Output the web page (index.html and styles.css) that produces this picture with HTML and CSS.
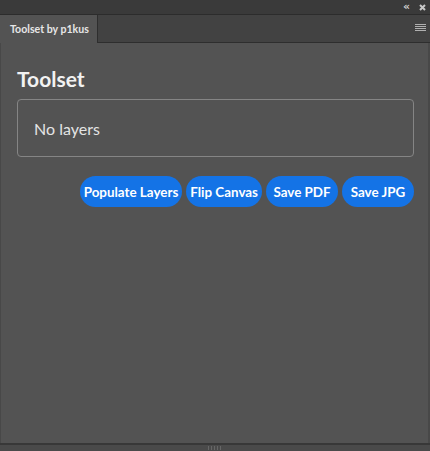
FILE: index.html
```html
<!DOCTYPE html>
<html>
<head>
<meta charset="utf-8">
<link rel="stylesheet" href="styles.css">
</head>
<body>
<div class="window">
  <div class="topbar">
    <span class="collapse">&lsaquo;&lsaquo;</span>
    <svg class="close" width="7" height="7" viewBox="0 0 7 7"><path d="M1 1L6 6M6 1L1 6" stroke="#c8c8c8" stroke-width="2"/></svg>
  </div>
  <div class="tabbar">
    <div class="tab">Toolset by p1kus</div>
    <div class="tabrest">
      <svg class="menu" width="11" height="9" viewBox="0 0 11 9"><path d="M0 0.5H11M0 2.5H11M0 4.5H11M0 6.5H11" stroke="#b0b0b0" stroke-width="1"/></svg>
    </div>
  </div>
  <div class="panel">
    <h1 class="title">Toolset</h1>
    <div class="layers">No layers</div>
    <div class="actions">
      <button class="btn">Populate Layers</button>
      <button class="btn">Flip Canvas</button>
      <button class="btn">Save PDF</button>
      <button class="btn">Save JPG</button>
    </div>
  </div>
  <div class="footer"><span class="grip"></span></div>
</div>
</body>
</html>
```
FILE: styles.css
```css
html, body {
  margin: 0;
  padding: 0;
  background: #535353;
}
.window {
  width: 430px;
  height: 451px;
  display: flex;
  flex-direction: column;
  font-family: Lato, "Open Sans", sans-serif;
}
.topbar {
  height: 14px;
  background: #3a3a3a;
  border-bottom: 1px solid #2c2c2c;
  display: flex;
  align-items: center;
  justify-content: flex-end;
  gap: 11px;
  padding-right: 4px;
}
.collapse {
  color: #d0d0d0;
  font-size: 11px;
  font-weight: bold;
  letter-spacing: -2px;
  line-height: 14px;
  font-family: "DejaVu Sans", sans-serif;
}
.close {
  display: block;
}
.tabbar {
  height: 28px;
  display: flex;
  background: #424242;
}
.tab {
  width: 87px;
  padding-left: 10px;
  background: #535353;
  border-right: 1px solid #2e2e2e;
  color: #e6e6e6;
  font-size: 10.6px;
  font-weight: bold;
  line-height: 28px;
  white-space: nowrap;
}
.tabrest {
  flex: 1;
  border-bottom: 1px solid #2e2e2e;
  display: flex;
  justify-content: flex-end;
  align-items: center;
  padding-right: 4px;
}
.menu {
  display: block;
}
.panel {
  flex: 1;
  background: #535353;
  border-left: 1px solid #484848;
  border-right: 2px solid #484848;
  padding: 24px 14px 0 16px;
}
.title {
  margin: 0 0 8px 0;
  font-size: 21px;
  line-height: 24px;
  font-weight: 700;
  color: #f2f2f2;
}
.layers {
  height: 56px;
  border: 1px solid #858585;
  border-radius: 4px;
  display: flex;
  align-items: center;
  padding-left: 16px;
  color: #e4e4e4;
  font-size: 16px;
}
.actions {
  display: flex;
  justify-content: flex-end;
  gap: 4px;
  margin-top: 19px;
}
.btn {
  height: 31px;
  min-width: 72px;
  border: none;
  border-radius: 16px;
  background: #1473e6;
  color: #ffffff;
  font-family: Lato, sans-serif;
  font-size: 13.4px;
  font-weight: 700;
  padding: 0 4px;
  cursor: pointer;
}
.footer {
  height: 6px;
  border-top: 2px solid #383838;
  background: #4a4a4a;
  display: flex;
  justify-content: center;
}
.grip {
  width: 14px;
  height: 4px;
  margin-top: 1px;
  background: repeating-linear-gradient(90deg, #666 0 1px, transparent 1px 3px);
}
```
